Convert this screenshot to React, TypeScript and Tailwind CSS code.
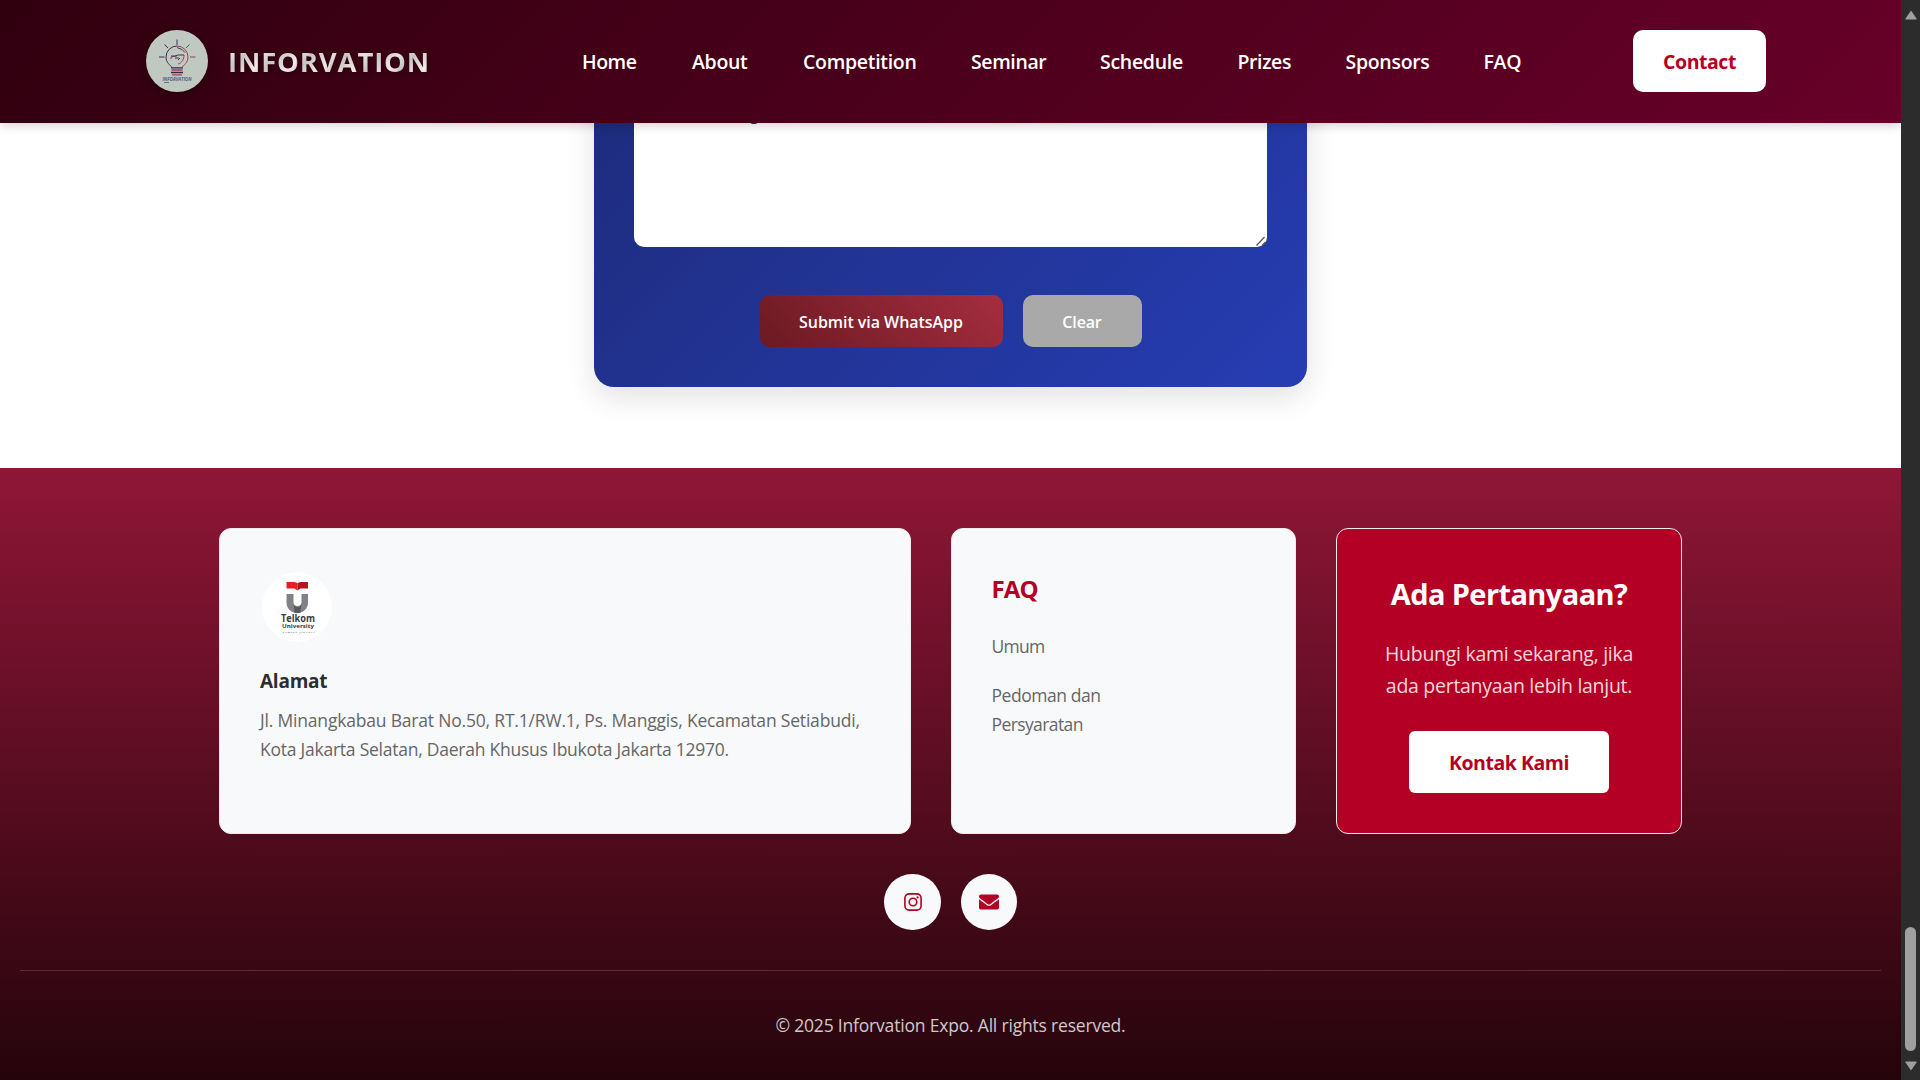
import { FaEnvelope } from "react-icons/fa";

const navItems = [
  { label: "Home", cls: "w-[110px] tracking-[-0.5px]" },
  { label: "About", cls: "w-[111px] tracking-[-0.3px]" },
  { label: "Competition", cls: "w-[168px] tracking-[-0.3px]" },
  { label: "Seminar", cls: "w-[129px] tracking-[-0.4px]" },
  { label: "Schedule", cls: "w-[137.500px] tracking-[-0.3px]" },
  { label: "Prizes", cls: "w-[108px] tracking-[-0.4px]" },
  { label: "Sponsors", cls: "w-[138px] tracking-[-0.3px]" },
  { label: "FAQ", cls: "w-[40px] tracking-[-0.3px]" },
];

function BulbLogo() {
  return (
    <div className="size-[62px] overflow-hidden rounded-full bg-[#bfc9c1] shadow-[0_4px_15px_rgba(0,0,0,0.3)]">
      <svg viewBox="0 0 62 62" className="size-full" fill="none">
        <g stroke="#3a3054" strokeWidth="1">
          <path d="M31 9.500v5.500M18.500 14.500l3.500 3.500M13 27h5.500" />
          <path d="M25.500 37c-1-2-5.500-4-5.500-10a11 11 0 0 1 11-11" />
        </g>
        <g stroke="#9c3f55" strokeWidth="1">
          <path d="M43.500 14.500l-3.500 3.500M44 27h5.500" />
          <path d="M31 16a11 11 0 0 1 11 11c0 6-4.500 8-5.500 10" />
          <path d="M25 29v-2l6-1M38 25c0 4-2 8-6 9" />
        </g>
        <path d="M25 26h4l3-1h6M29 28h4M31 17.500l5 2 3 3M32 30l2-2" stroke="#4b3152" strokeWidth="1" />
        <path d="M25.500 40h11M26 44.800h10" stroke="#9c3f55" strokeWidth="1.300" />
        <path d="M25 37.800h12M25 42.500h12" stroke="#2d2850" strokeWidth="1.300" />
        <text x="16.500" y="51.200" fontFamily="Open Sans, sans-serif" fontSize="5" fontWeight="600" fontStyle="italic" fill="#3c4674" textLength="29" lengthAdjust="spacingAndGlyphs">INFORVATION</text>
        <path d="M18 52.500h5" stroke="#3c4674" strokeWidth="0.700" />
      </svg>
    </div>
  );
}

function TelkomLogo() {
  return (
    <div className="mt-[12px] ml-[1.500px] size-[70px] overflow-hidden rounded-full bg-white">
      <svg viewBox="0 0 70 70" className="size-full">
        <path d="M24.500 10h8l3 1v7.500l-3-2h-8z" fill="#ed1c24" />
        <path d="M46 10h-7.500l-3 1v7.500l3-2H46z" fill="#b3161c" />
        <path d="M24.500 22h7v8a4 4 0 0 0 8 0v-8H46v8.500a10.700 10.700 0 0 1-21.500 0z" fill="#808285" />
        <path d="M31.700 32.500a4 4 0 0 0 7.600 0l-.8 8a10 10 0 0 1-6 0z" fill="#58595b" />
        <g fontFamily="Open Sans, sans-serif" fontWeight="700" fill="#3b3b3d">
          <text x="19" y="50.300" fontSize="10" textLength="34" lengthAdjust="spacingAndGlyphs">Telkom</text>
          <text x="20" y="56" fontSize="5.800" textLength="32" lengthAdjust="spacingAndGlyphs">University</text>
          <text x="20.500" y="60.700" fontSize="2.400" fill="#777" textLength="32">KAMPUS JAKARTA</text>
        </g>
      </svg>
    </div>
  );
}

function InstagramIcon() {
  return (
    <svg viewBox="0 0 18 18" className="size-[18px]" fill="none" stroke="#b30024" strokeWidth="1.600">
      <rect x="0.900" y="0.900" width="16.200" height="16.200" rx="4.300" />
      <circle cx="9" cy="9" r="3.800" />
      <circle cx="13.600" cy="4.400" r="1.100" fill="#b30024" stroke="none" />
    </svg>
  );
}

function Header() {
  return (
    <header className="relative z-10 flex h-[123px] shrink-0 items-center bg-[linear-gradient(135deg,#30000f_0%,#680028_100%)] pb-px pl-[146px] shadow-[0_2px_10px_rgba(0,0,0,0.2)]">
      <BulbLogo />
      <div className="ml-5 w-[354px] pt-[5px] leading-[44px] drop-shadow-[2px_2px_3px_rgba(0,0,0,0.35)]">
        <span className="inline-block bg-[linear-gradient(135deg,#ffffff_0%,#c8c4c4_40%,#f5e9e9_70%,#b4b0b0_100%)] bg-[length:34px_44px] bg-clip-text text-[27.500px] font-bold tracking-[0.850px] text-transparent">
          INFORVATION
        </span>
      </div>
      <nav className="flex w-[1051px] pt-px text-[19.500px] leading-[30px] font-semibold text-white">
        {navItems.map((n) => (
          <a key={n.label} className={n.cls}>{n.label}</a>
        ))}
      </nav>
      <a className="flex h-[62px] w-[133px] items-center justify-center rounded-[10px] bg-white pt-0.5 text-[19.500px] font-bold tracking-[-0.450px] text-[#b30024]">
        Contact
      </a>
    </header>
  );
}

function ContactForm() {
  return (
    <section className="flex h-[345px] shrink-0 justify-center">
      <div className="-mt-[420px] flex h-[684px] w-[713px] flex-col justify-end rounded-[20px] bg-[linear-gradient(135deg,#1b2568_0%,#263db3_100%)] px-10 pb-10 shadow-[0_10px_30px_rgba(0,0,0,0.12)]">
        <div className="relative h-[180px] rounded-[10px] bg-white">
          <div className="absolute top-[34.500px] left-[116px] text-base leading-6 text-[#333]">g</div>
          <svg viewBox="0 0 12 12" className="absolute right-0 bottom-0 size-3" stroke="#555" strokeWidth="1.200">
            <path d="M1.500 10.500 9.500 2M7 10.500 10.500 7" />
          </svg>
        </div>
        <div className="mt-12 flex justify-center gap-5 text-[16px] font-semibold text-white">
          <button className="h-[52px] w-[243px] rounded-[10px] bg-[linear-gradient(45deg,#6b1a22,#a52d3f)] pt-0.5 tracking-[-0.050px]">Submit via WhatsApp</button>
          <button className="h-[52px] w-[119px] rounded-[10px] bg-[#a9a9a9] pt-0.5 tracking-[-0.150px]">Clear</button>
        </div>
      </div>
    </section>
  );
}

function Footer() {
  return (
    <footer className="flex h-[612px] flex-col bg-[linear-gradient(180deg,#8f1636_0%,#25040c_100%)] px-5 pt-[60px]">
      <div className="ml-[199px] flex gap-10">
        <div className="h-[306px] w-[692px] rounded-xl border border-[#e9ecef] bg-[#f8f9fb] px-10 pt-[31px]">
          <TelkomLogo />
          <h4 className="mt-[23px] text-[19px] leading-[32px] font-bold tracking-[-0.250px] text-[#2d2d2d]">Alamat</h4>
          <p className="mt-[9px] text-[17.500px] leading-[29px] tracking-[-0.190px] whitespace-nowrap text-[#666]">
            Jl. Minangkabau Barat No.50, RT.1/RW.1, Ps. Manggis, Kecamatan Setiabudi,
            <br />
            <span className="tracking-[-0.240px]">Kota Jakarta Selatan, Daerah Khusus Ibukota Jakarta 12970.</span>
          </p>
        </div>
        <div className="h-[306px] w-[345px] rounded-xl border border-[#e9ecef] bg-[#f8f9fb] pt-[41px] pl-[39.500px]">
          <h3 className="text-[24px] leading-[38px] font-bold tracking-[-0.9px] text-[#b30024]">FAQ</h3>
          <ul className="mt-[24px] text-[17.500px] leading-[29px] text-[#666]">
            <li className="tracking-[-0.7px]">Umum</li>
            <li className="mt-5 tracking-[-0.450px]">
              Pedoman dan
              <br />
              <span className="tracking-[-0.6px]">Persyaratan</span>
            </li>
          </ul>
        </div>
        <div className="flex h-[306px] w-[346px] flex-col items-center rounded-xl border border-[#e9ecef] bg-[#b30024] pt-[41px] text-white">
          <h3 className="text-[29px] leading-[48px] font-bold tracking-[-0.6px]">Ada Pertanyaan?</h3>
          <p className="mt-[20px] text-center text-[19.500px] leading-[32px] tracking-[-0.280px] whitespace-nowrap text-[#fbd5dc]">
            Hubungi kami sekarang, jika
            <br />
            ada pertanyaan lebih lanjut.
          </p>
          <a className="mt-[29px] flex h-[62px] w-[200px] items-center justify-center rounded-[6px] bg-white pt-0.5 text-[19.500px] font-bold tracking-[-0.450px] text-[#b30024]">
            Kontak Kami
          </a>
        </div>
      </div>
      <div className="mt-10 flex justify-center gap-5">
        <a className="flex h-14 w-[57px] items-center justify-center rounded-full bg-[#f8f9fb]"><InstagramIcon /></a>
        <a className="flex size-14 items-center justify-center rounded-full bg-[#f8f9fb] text-[#b30024]"><FaEnvelope size={20} /></a>
      </div>
      <div className="mt-10 border-t border-white/15 pt-[40px] text-center text-[17.500px] leading-[29px] tracking-[-0.190px] text-[#d0c8ca]">
        © 2025 Inforvation Expo. All rights reserved.
      </div>
    </footer>
  );
}

function Scrollbar() {
  return (
    <div className="flex w-[19px] flex-col items-center bg-[#2c2c2c]">
      <svg viewBox="0 0 12 10" className="mt-[10px] h-[10px] w-3" fill="#9f9f9f"><path d="M6 0.500 11.500 8.500Q12 9.500 11 9.500H1Q0 9.500 .5 8.500Z" /></svg>
      <div className="mt-[907px] h-[124px] w-[11px] rounded-full bg-[#9f9f9f]" />
      <svg viewBox="0 0 12 10" className="mt-[10px] h-[10px] w-3" fill="#9f9f9f"><path d="M6 9.500 11.500 1.500Q12 .5 11 .5H1Q0 .5 .5 1.500Z" /></svg>
    </div>
  );
}

export default function App() {
  return (
    <div className="flex h-[1080px] w-[1920px] overflow-hidden bg-white font-['Open_Sans',sans-serif]">
      <div className="flex w-[1901px] flex-col overflow-hidden">
        <Header />
        <ContactForm />
        <Footer />
      </div>
      <Scrollbar />
    </div>
  );
}
